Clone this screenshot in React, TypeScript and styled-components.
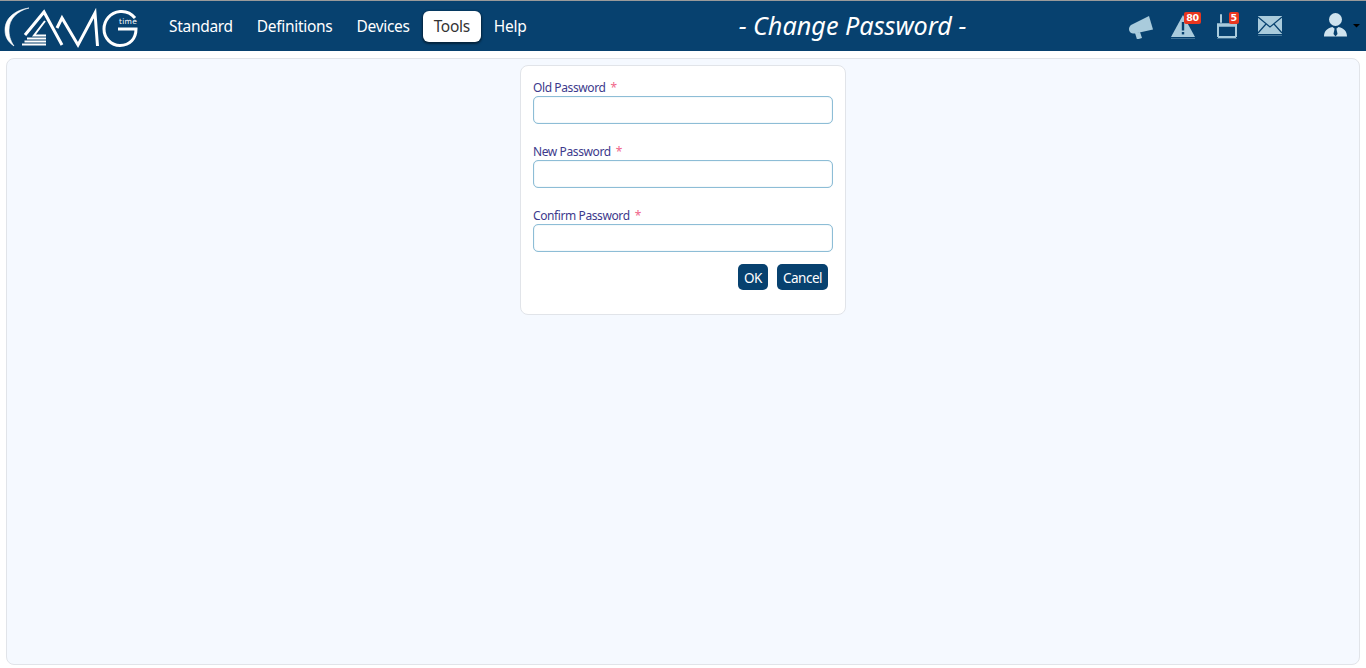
import React from 'react';
import styled, { createGlobalStyle } from 'styled-components';

const GlobalStyle = createGlobalStyle`
  html, body {
    margin: 0;
    padding: 0;
    height: 100%;
    background: #ffffff;
    font-family: 'Noto Sans', 'DejaVu Sans', sans-serif;
  }
`;

const Page = styled.div`
  display: flex;
  flex-direction: column;
  height: 668px;
  overflow: hidden;
`;

const Header = styled.header`
  display: flex;
  align-items: center;
  height: 50px;
  flex: none;
  border-top: 1px solid #9a9a9a;
  background: #07416f;
`;

const LogoBox = styled.div`
  flex: none;
  width: 158px;
  height: 50px;
`;

const Nav = styled.nav`
  display: flex;
  align-items: center;
  gap: 2px;
  width: 517px;
  flex: none;
`;

const NavItem = styled.a<{ $active?: boolean }>`
  padding: 5px 11px;
  border-radius: 6px;
  font-size: 15.5px;
  line-height: 21px;
  letter-spacing: -0.3px;
  color: ${p => (p.$active ? '#333333' : '#ffffff')};
  background: ${p => (p.$active ? '#ffffff' : 'transparent')};
  box-shadow: ${p => (p.$active ? '0 1px 2px 1px rgba(0,0,0,.45)' : 'none')};
`;

const Title = styled.h1`
  flex: none;
  width: 355px;
  margin: 0;
  padding-bottom: 2px;
  font-size: 25.2px;
  font-weight: 400;
  font-style: italic;
  text-align: center;
  color: #ffffff;
`;

const IconBar = styled.div`
  display: flex;
  align-items: center;
  margin-left: auto;
`;

const IconSlot = styled.div<{ $w: number }>`
  position: relative;
  width: ${p => p.$w}px;
  height: 50px;
  display: flex;
  align-items: center;
`;

const Badge = styled.span<{ $right: number }>`
  position: absolute;
  top: 11px;
  right: ${p => p.$right}px;
  padding: 0 2px;
  border-radius: 2px;
  background: #e8361f;
  color: #fff;
  font-family: 'DejaVu Sans', sans-serif;
  font-size: 9.5px;
  font-weight: 700;
  line-height: 12px;
  letter-spacing: -0.2px;
`;

const Main = styled.main`
  flex: 1;
  display: flex;
  justify-content: center;
  align-items: flex-start;
  margin: 7px 6px 3px 6px;
  padding-top: 6px;
  border: 1px solid #e1e4e9;
  border-radius: 8px;
  background: #f5f9ff;
`;

const Card = styled.form`
  box-sizing: border-box;
  width: 326px;
  height: 250px;
  padding: 12px 12px 0;
  border: 1px solid #e1e4e9;
  border-radius: 8px;
  background: #ffffff;
`;

const Field = styled.div`
  display: flex;
  flex-direction: column;
  margin-bottom: 18px;
`;

const Label = styled.label`
  height: 18px;
  font-size: 12px;
  line-height: 20px;
  letter-spacing: -0.4px;
  color: #3d3a8c;
`;

const Required = styled.span`
  margin-left: 5px;
  color: #f0668a;
`;

const Input = styled.input`
  box-sizing: border-box;
  width: 100%;
  height: 28px;
  border: 1px solid #8dbdd6;
  border-radius: 5px;
  background: #fff;
  outline: none;
  box-shadow: inset 0 0 1px #8dbdd6;
`;

const Actions = styled.div`
  display: flex;
  justify-content: flex-end;
  gap: 9px;
  margin-top: -6px;
  padding-right: 5px;
`;

const Button = styled.button`
  min-width: 30px;
  height: 26px;
  padding: 1px 6px 0;
  border: none;
  border-radius: 5px;
  background: #07416f;
  color: #ffffff;
  font-family: inherit;
  font-size: 13.5px;
  letter-spacing: -0.5px;
`;

const Logo = () => (
  <svg width="158" height="50" viewBox="0 0 158 50" fill="none" stroke="#fff" strokeWidth="3">
    <path d="M29 7C15 9 5 17 5 29c0 7 3 12 9 16C10 39 9 34 9 29C9 18 17 10 29 7z" fill="#fff" strokeWidth="0.6" />
    <path d="M25 34L44 11L62 44" />
    <path d="M45 20L34 34.5H46" strokeWidth="2" />
    <path d="M27 37.5H46M24.5 40.5H46M22 43.5H46" strokeWidth="1.8" />
    <path d="M57 27L62 17L78 44L95 12L97.5 45" />
    <path d="M135 17C131 12 125 10 120 10.5c-10 1-16 9-16 17.5c0 9 7 16.500 16 16.500c10 0 16-7 16-16.500h-18" />
    <text x="119" y="23" fill="#fff" stroke="none" fontSize="7.500" letterSpacing="0.300" fontFamily="'DejaVu Sans', sans-serif">time</text>
  </svg>
);

const Megaphone = () => (
  <svg width="28" height="26" viewBox="0 0 28 26" fill="#a9cbdc">
    <path d="M5 12L23 3l4 13.500L9 20.500c-3 .5-6-1-6-4.500c0-2 1-3 2-4z" />
    <path d="M9 20l5-1 2 6-5 1.500z" />
  </svg>
);

const Warning = () => (
  <svg width="26" height="26" viewBox="0 0 26 26">
    <path d="M13 2L25 24H1z" fill="#a9cbdc" />
    <rect x="1" y="25" width="24" height="1" fill="#a9cbdc" opacity=".35" />
    <rect x="11.800" y="9" width="2.400" height="8.500" fill="#07416f" />
    <rect x="11.800" y="19" width="2.400" height="2.400" fill="#07416f" />
  </svg>
);

const CalendarIcon = () => (
  <svg width="26" height="26" viewBox="0 0 26 26" fill="none" stroke="#a9cbdc">
    <path d="M4 11v13M22 11v13M4 24h18" strokeWidth="2" />
    <path d="M3 12h20" strokeWidth="3.500" />
    <path d="M7 2v7" strokeWidth="2" strokeLinecap="round" />
    <path d="M3 25.500h20" strokeWidth="1" opacity=".35" />
  </svg>
);

const Mail = () => (
  <svg width="28" height="22" viewBox="0 0 28 22">
    <rect x="2" y="1" width="24" height="18" fill="#a9cbdc" />
    <rect x="2" y="20" width="24" height="1" fill="#a9cbdc" opacity=".35" />
    <path d="M2 2l12 10L26 2M2 18l8-9M26 18l-8-9" stroke="#07416f" strokeWidth="1.200" fill="none" />
  </svg>
);

const UserIcon = () => (
  <svg width="40" height="26" viewBox="0 0 40 26">
    <circle cx="13.500" cy="6.500" r="6.500" fill="#cfe3ee" />
    <path d="M2 23.500c0-5 3-8.500 8.500-9.500l3 2.500 3-2.500c5.500 1 8.500 4.500 8.500 9.500z" fill="#cfe3ee" />
    <path d="M12.500 16h2l1 5-2 2.500-2-2.500z" fill="#07416f" />
    <path d="M31 11h7l-3.500 3.500z" fill="#000" />
  </svg>
);

const App = () => {
  return (
    <Page>
      <GlobalStyle />
      <Header>
        <LogoBox>
          <Logo />
        </LogoBox>
        <Nav>
          <NavItem>Standard</NavItem>
          <NavItem>Definitions</NavItem>
          <NavItem>Devices</NavItem>
          <NavItem $active>Tools</NavItem>
          <NavItem>Help</NavItem>
        </Nav>
        <Title>- Change Password -</Title>
        <IconBar>
          <IconSlot $w={44}>
            <Megaphone />
          </IconSlot>
          <IconSlot $w={44}>
            <Warning />
            <Badge $right={13}>80</Badge>
          </IconSlot>
          <IconSlot $w={42}>
            <CalendarIcon />
            <Badge $right={17}>5</Badge>
          </IconSlot>
          <IconSlot $w={66}>
            <Mail />
          </IconSlot>
          <IconSlot $w={44}>
            <UserIcon />
          </IconSlot>
        </IconBar>
      </Header>
      <Main>
        <Card>
          <Field>
            <Label>Old Password<Required>*</Required></Label>
            <Input type="password" />
          </Field>
          <Field>
            <Label>New Password<Required>*</Required></Label>
            <Input type="password" />
          </Field>
          <Field>
            <Label>Confirm Password<Required>*</Required></Label>
            <Input type="password" />
          </Field>
          <Actions>
            <Button type="button">OK</Button>
            <Button type="button">Cancel</Button>
          </Actions>
        </Card>
      </Main>
    </Page>
  );
};

export default App;
